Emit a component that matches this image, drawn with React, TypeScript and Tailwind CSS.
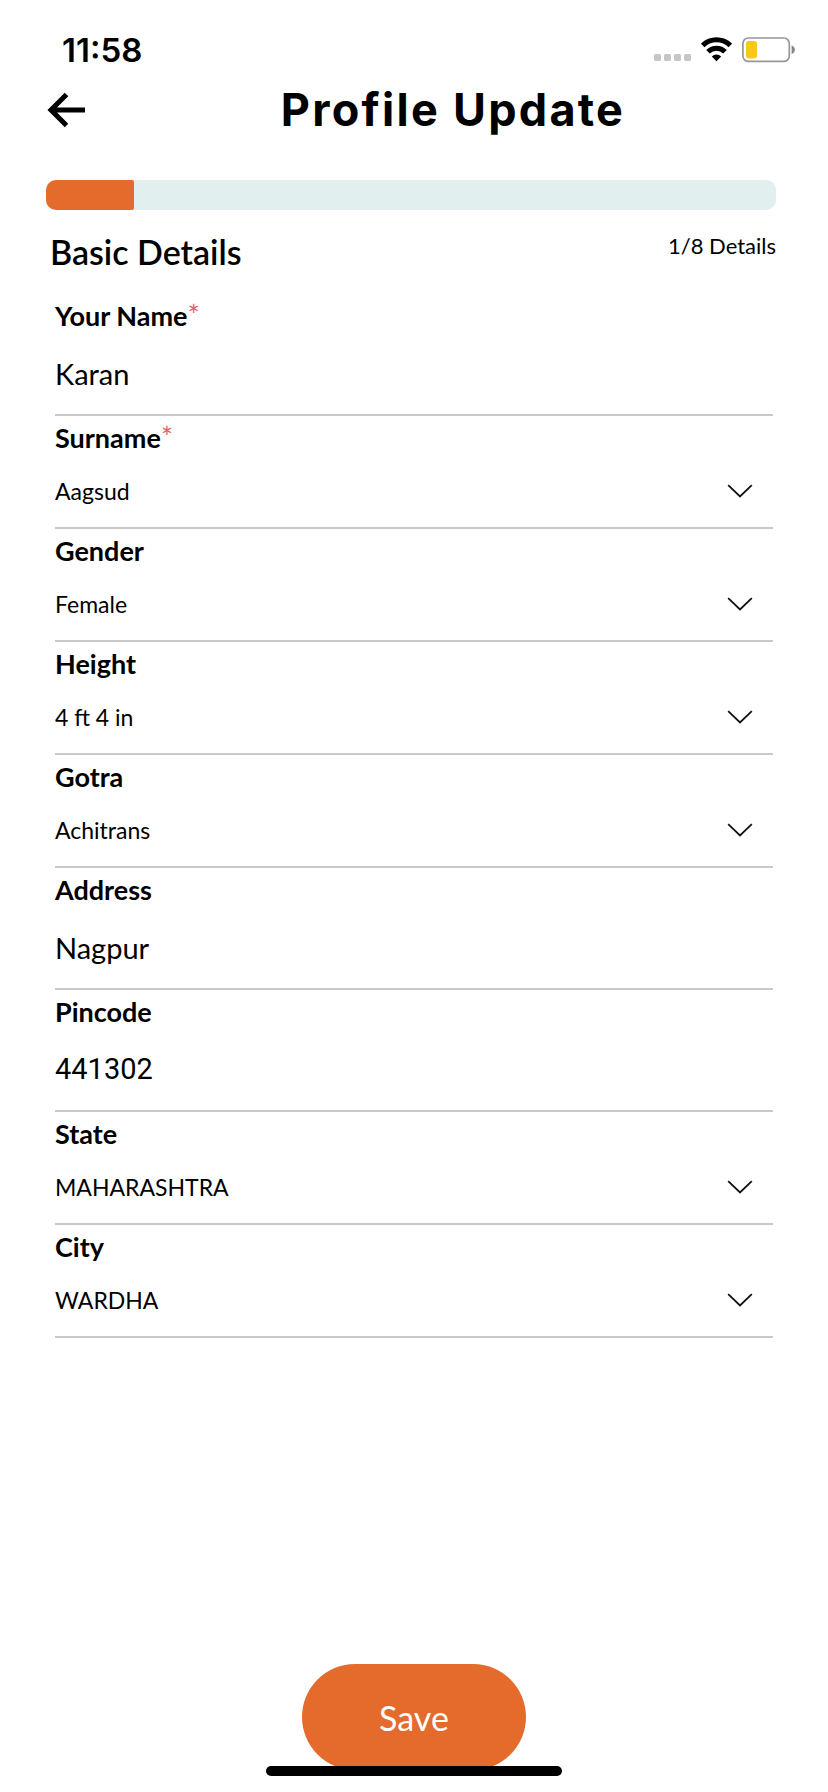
import { useState } from "react";

type Field = {
  id: string;
  label: string;
  value: string;
  type: "text" | "number" | "select";
  required?: boolean;
};

const FIELDS: Field[] = [
  { id: "name", label: "Your Name", value: "Karan", type: "text", required: true },
  { id: "surname", label: "Surname", value: "Aagsud", type: "select", required: true },
  { id: "gender", label: "Gender", value: "Female", type: "select" },
  { id: "height", label: "Height", value: "4 ft 4 in", type: "select" },
  { id: "gotra", label: "Gotra", value: "Achitrans", type: "select" },
  { id: "address", label: "Address", value: "Nagpur", type: "text" },
  { id: "pincode", label: "Pincode", value: "441302", type: "number" },
  { id: "state", label: "State", value: "MAHARASHTRA", type: "select" },
  { id: "city", label: "City", value: "WARDHA", type: "select" },
];

function StatusBar() {
  return (
    <div className="flex h-[74px] items-end justify-between pl-[62px] pr-[33px]">
      <span className="font-['Inter',sans-serif] text-[33px] font-semibold leading-[48px]">11:58</span>
      <div className="flex h-[48px] items-center">
        <svg className="mr-[10px]" width="37" height="26" viewBox="0 0 37 26" fill="#c6c6c6">
          <rect x="0" y="17" width="7" height="7" rx="1.5" />
          <rect x="10" y="17" width="7" height="7" rx="1.5" />
          <rect x="20" y="17" width="7" height="7" rx="1.5" />
          <rect x="30" y="17" width="7" height="7" rx="1.5" />
        </svg>
        <svg className="mr-[10px]" width="31" height="26" viewBox="0 0 31 26" fill="none" stroke="#000" strokeWidth="5">
          <path d="M1.7 8.4a19.8 19.8 0 0 1 27.6 0" />
          <path d="M7 14.8a12 12 0 0 1 17 0" />
          <path d="M15.5 24.2l-4.7-4.7a6.7 6.7 0 0 1 9.4 0z" fill="#000" stroke="none" />
        </svg>
        <svg width="53" height="26" viewBox="0 0 53 26">
          <rect x="0.9" y="1" width="46.4" height="23.4" rx="5.5" fill="#fff" stroke="#969696" strokeWidth="1.7" />
          <rect x="4" y="4" width="11" height="17.4" rx="3" fill="#f5c916" />
          <path d="M49.6 8.5c4.4 1.8 4.4 6.8 0 8.6z" fill="#858585" />
        </svg>
      </div>
    </div>
  );
}

function FieldRow({ field, value, onChange }: { field: Field; value: string; onChange: (v: string) => void }) {
  return (
    <div className="border-b-2 border-[#c9c9c9]">
      <label htmlFor={field.id} className="flex h-[44px] items-center text-[27px] font-bold">
        {field.label}
        {field.required && (
          <span className="self-start pt-[6px] text-[29px] font-normal leading-[30px] text-[#e0616a]">*</span>
        )}
      </label>
      {field.type === "select" ? (
        <div className="relative pb-[5px]">
          <select
            id={field.id}
            value={value}
            onChange={(e) => onChange(e.target.value)}
            className="block h-[62px] w-full appearance-none bg-transparent text-[23px] outline-none"
          >
            <option>{field.value}</option>
          </select>
          <svg
            className="pointer-events-none absolute right-[20px] top-[24px]"
            width="26"
            height="14"
            viewBox="0 0 26 14"
            fill="none"
            stroke="#111"
            strokeWidth="1.8"
          >
            <path d="M1.2 1.2L13 12.4L24.8 1.2" />
          </svg>
        </div>
      ) : (
        <div className="pb-[6px]">
          <input
            id={field.id}
            type="text"
            inputMode={field.type === "number" ? "numeric" : "text"}
            value={value}
            onChange={(e) => onChange(e.target.value)}
            className={`block h-[70px] w-full bg-transparent text-[29px] outline-none ${
              field.type === "number" ? "font-['Roboto',sans-serif]" : ""
            }`}
          />
        </div>
      )}
    </div>
  );
}

export default function App() {
  const [values, setValues] = useState<Record<string, string>>(
    Object.fromEntries(FIELDS.map((f) => [f.id, f.value]))
  );

  return (
    <div className="relative flex min-h-screen flex-col bg-white font-['Lato',sans-serif] text-black">
      <StatusBar />

      {/* Header */}
      <header className="flex h-[72px] items-center pl-[46px] pr-[8px]">
        <button type="button" aria-label="Go back" className="w-[40px]">
          <svg width="40" height="40" viewBox="0 0 40 40" fill="none" stroke="#000" strokeWidth="5">
            <path d="M20.5 4.5L5 20l15.5 15.5M5 20H39" />
          </svg>
        </button>
        <h1 className="flex-1 text-center font-['Inter',sans-serif] text-[45px] font-bold tracking-wider">
          Profile Update
        </h1>
      </header>

      <main className="pl-[46px] pr-[52px] pt-[34px]">
        <div
          role="progressbar"
          aria-label="Profile progress"
          aria-valuemin={0}
          aria-valuemax={8}
          aria-valuenow={1}
          className="h-[30px] overflow-hidden rounded-[10px] bg-[#e1efee]"
        >
          <div className="h-full w-[12%] rounded-r-[2px] bg-[#e46b2b]" />
        </div>

        <div className="flex h-[84px] items-start justify-between pl-[4px] pt-[20px]">
          <h2 className="text-[34px] font-semibold leading-[44px]">Basic Details</h2>
          <span className="text-[22px] leading-[32px]">1/8 Details</span>
        </div>

        <form className="pl-[9px] pr-[3px]">
          {FIELDS.map((f) => (
            <FieldRow
              key={f.id}
              field={f}
              value={values[f.id]}
              onChange={(v) => setValues((prev) => ({ ...prev, [f.id]: v }))}
            />
          ))}
        </form>
      </main>

      <footer className="mt-auto flex justify-center pb-[22px] pt-[40px]">
        <button type="button" className="h-[106px] w-[224px] rounded-full bg-[#e46b2b] text-[34px] text-white">
          Save
        </button>
      </footer>

      {/* Home indicator */}
      <div className="absolute bottom-[16px] left-1/2 h-[10px] w-[296px] -translate-x-1/2 rounded-full bg-black" />
    </div>
  );
}
